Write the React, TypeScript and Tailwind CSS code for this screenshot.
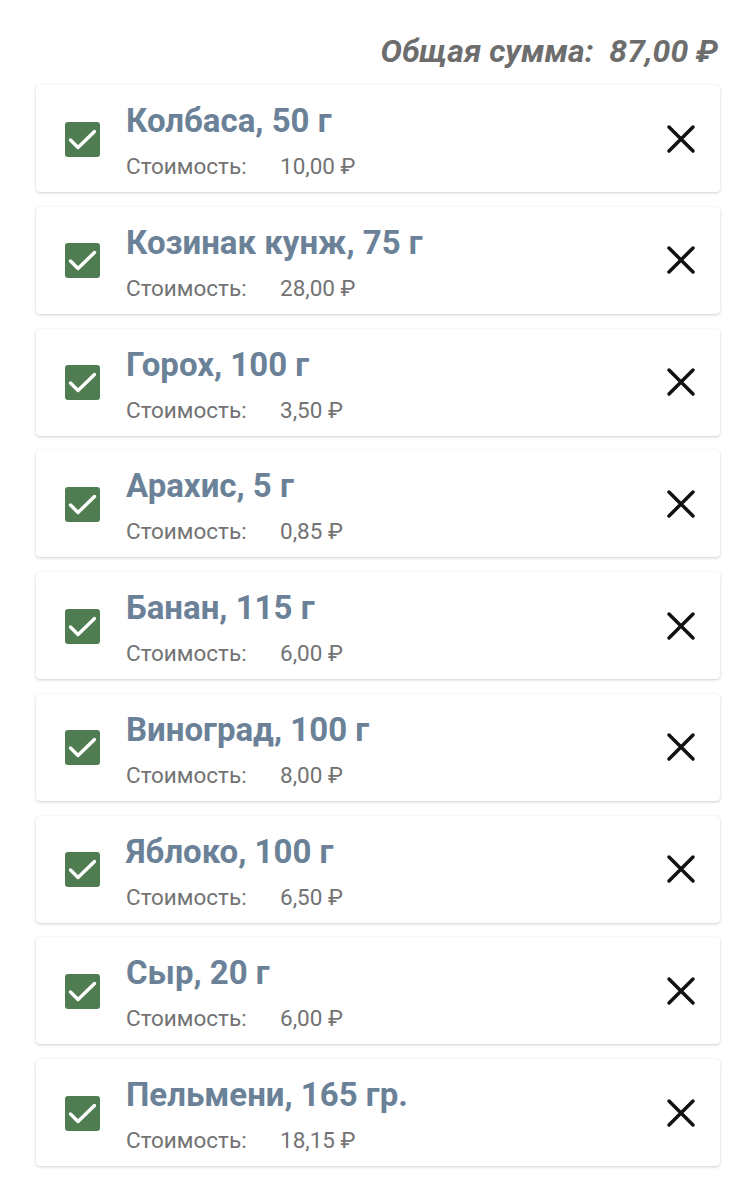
import React from "react";

const items = [
  { name: "Колбаса, 50 г", price: "10,00 ₽" },
  { name: "Козинак кунж, 75 г", price: "28,00 ₽" },
  { name: "Горох, 100 г", price: "3,50 ₽" },
  { name: "Арахис, 5 г", price: "0,85 ₽" },
  { name: "Банан, 115 г", price: "6,00 ₽" },
  { name: "Виноград, 100 г", price: "8,00 ₽" },
  { name: "Яблоко, 100 г", price: "6,50 ₽" },
  { name: "Сыр, 20 г", price: "6,00 ₽" },
  { name: "Пельмени, 165 гр.", price: "18,15 ₽" },
];

export default function App() {
  return (
    <div className="min-h-[1200px] w-[756px] bg-white" style={{ fontFamily: "Roboto, 'Noto Sans', sans-serif" }}>
      <div className="pl-[32px] pr-[38px] pt-[32px] mb-[15px] text-right">
        <div className="text-[32px] leading-[38px] font-bold italic text-[#6d6d6d] whitespace-pre">
          {"Общая сумма:  87,00 ₽"}
        </div>
      </div>
      <div className="flex flex-col gap-[14.75px] px-[36px]">
        {items.map((it) => (
          <div
            key={it.name}
            className="flex items-center h-[107px] bg-white rounded-[4px] shadow-[0_1px_3px_rgba(0,0,0,0.18),0_0_1px_rgba(0,0,0,0.08)] pl-[29px] pr-[19px]"
          >
            <div className="w-[35px] h-[35px] rounded-[3px] bg-[#4f7d51] flex items-center justify-center shrink-0 mt-[1px]">
              <svg width="35" height="35" viewBox="0 0 35 35" fill="none">
                <path d="M5.5 18l7.5 7.5L29.5 9.5" stroke="white" strokeWidth="3.4" strokeLinecap="round" strokeLinejoin="round" />
              </svg>
            </div>
            <div className="flex flex-col ml-[26px] pt-[17px] pb-[12px] flex-1 h-full">
              <div className="text-[33px] leading-[38px] font-bold text-[#6a8197] whitespace-nowrap">{it.name}</div>
              <div className="mt-[12px] text-[22.5px] leading-[28px] text-[#737373] flex">
                <span className="w-[154px]">Стоимость:</span>
                <span>{it.price}</span>
              </div>
            </div>
            <div className="w-[40px] h-[40px] flex items-center justify-center shrink-0">
              <svg width="40" height="40" viewBox="0 0 40 40" fill="none">
                <path d="M8 8L32 32M32 8L8 32" stroke="#111" strokeWidth="3.5" strokeLinecap="round" />
              </svg>
            </div>
          </div>
        ))}
      </div>
    </div>
  );
}
